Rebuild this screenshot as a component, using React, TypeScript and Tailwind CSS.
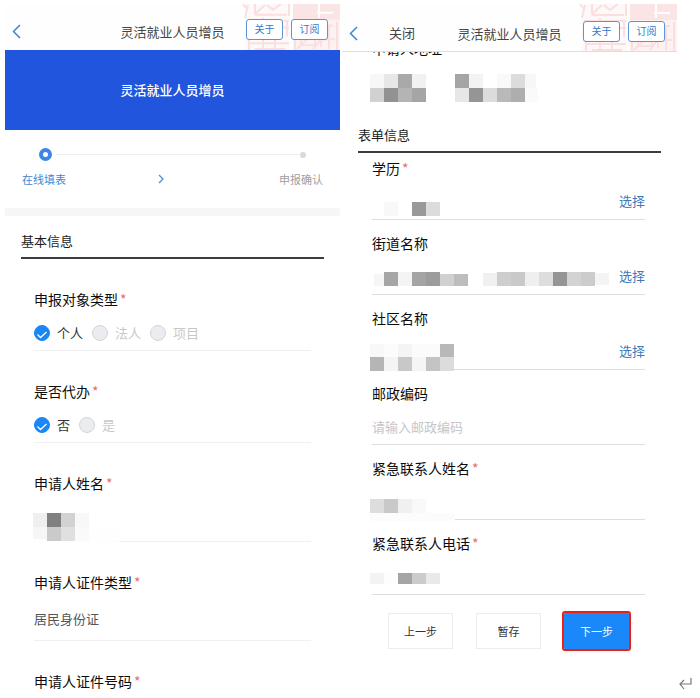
import React from "react";

type Cell = [x: number, y: number, w: number, h: number, fill: string];

function Mosaic({ cells, className }: { cells: Cell[]; className: string }) {
  return (
    <svg className={`-ml-0.5 block shrink-0 overflow-visible ${className}`} shapeRendering="crispEdges" aria-hidden="true">
      {cells.map(([x, y, w, h, fill], i) => (
        <rect key={i} x={x} y={y} width={w} height={h} fill={fill} />
      ))}
    </svg>
  );
}

function Seal() {
  return (
    <svg className="pointer-events-none absolute top-0 right-0 h-full w-[99px]" viewBox="0 0 99 47" preserveAspectRatio="none" fill="none" aria-hidden="true">
      <rect x="4" y="0" width="45" height="47" fill="#fef8f8" />
      <rect x="52" y="0" width="47" height="47" fill="#fdf1f1" />
      <rect x="52" y="0" width="47" height="16" fill="#fbe4e5" />
      <g stroke="#f9dfe0" strokeWidth="2">
        <path d="M2 0l3 4M7 1l-3 13M14 10L24 1M26 1l6 5 8-6M14 11h32M48 0v12M14 0v11" />
        <path d="M6 17h42M6 24h42M10 17v14M22 14v33M34 17v30M46 17v16M8 40h40M8 33v14M14 46h30" />
        <path d="M54 17v30M60 22h32M60 30h14v12H60zM80 22v22M88 22v24M96 18v29M56 46l10-10M72 46l8-10M80 36h14" />
      </g>
      <path d="M76 9h16M78 0v14" stroke="#fff" strokeWidth="2" />
    </svg>
  );
}

function Header({ closable = false, className }: { closable?: boolean; className: string }) {
  return (
    <header className={`relative grid grid-cols-[1fr_auto_1fr] items-end bg-[#fefefe] ${className}`}>
      <Seal />
      <div className={`relative flex items-center pl-[7px] ${closable ? "gap-[31px]" : ""}`}>
        <button type="button" aria-label="返回" className="flex h-[18px] items-center">
          <svg className="h-[15px] w-[9px]" viewBox="0 0 9 15" fill="none" stroke="#3f82d8" strokeWidth="1.5" aria-hidden="true">
            <path d="M8 1L1.5 7.5L8 14" />
          </svg>
        </button>
        {closable && (
          <button type="button" className="text-[13px] leading-4 text-[#444]">关闭</button>
        )}
      </div>
      <h1 className="relative text-[13px] leading-4 text-[#444]">灵活就业人员增员</h1>
      <div className="relative flex justify-end gap-2 pr-3">
        {["关于", "订阅"].map((t) => (
          <button key={t} type="button" className="flex h-[21px] w-[37px] items-center justify-center rounded-[3px] border border-[#5b95d6] bg-white pb-px text-[10px] leading-4 text-[#2f79cc]">
            {t}
          </button>
        ))}
      </div>
    </header>
  );
}

function SectionTitle({ children, className }: { children: string; className: string }) {
  return (
    <h2 className={`mx-4 border-b-2 border-[#3c3c3c] pb-[7px] text-[13px] leading-[18px] text-[#1c1c1c] ${className}`}>
      {children}
    </h2>
  );
}

function Name({ text, required }: { text: string; required?: boolean }) {
  return (
    <span className="block pb-0.5 text-[14px] leading-[18px] text-[#0c0c0c]">
      {text}
      {required && <span className="ml-0.5 text-[#ea6a6f]">*</span>}
    </span>
  );
}

function Radios({ legend, name, options }: { legend: string; name: string; options: string[] }) {
  return (
    <fieldset>
      <legend><Name text={legend} required /></legend>
      <div className="flex h-[41px] items-center gap-[9px] border-b border-[#f0f0f0] pt-[6px]">
        {options.map((o, i) => (
          <label key={o} className={`relative flex items-center gap-[7px] text-[13px] leading-5 ${i === 0 ? "text-[#333]" : "text-[#c8c8c8]"}`}>
            <input
              type="radio"
              name={name}
              defaultChecked={i === 0}
              disabled={i !== 0}
              className="size-4 appearance-none rounded-full border border-[#d4d5d8] bg-[#ebecef] checked:border-[#1b86f5] checked:bg-[#1b86f5]"
            />
            {i === 0 && (
              <svg className="pointer-events-none absolute left-0 size-4" viewBox="0 0 16 16" fill="none" stroke="#fff" strokeWidth="1.3" aria-hidden="true">
                <path d="M3.5 9.5L6.5 12.5L12.5 7" />
              </svg>
            )}
            {o}
          </label>
        ))}
      </div>
    </fieldset>
  );
}

function Redacted({ text, required, cells, pick, className = "h-[41px] border-[#dedede]" }: { text: string; required?: boolean; cells: Cell[]; pick?: boolean; className?: string }) {
  return (
    <div>
      <Name text={text} required={required} />
      <div className={`flex items-start justify-between border-b ${className}`}>
        <Mosaic cells={cells} className="h-10 w-60" />
        {pick && (
          <button type="button" aria-label={`选择${text}`} className="mt-3 shrink-0 text-[13px] leading-5 text-[#4179bb]">选择</button>
        )}
      </div>
    </div>
  );
}

const address: Cell[] = [
  [0, 0, 14, 14, "#f7f7f7"], [14, 0, 14, 14, "#e7e7e7"], [28, 0, 14, 14, "#a9a9a9"], [42, 0, 14, 14, "#f1f1f1"],
  [0, 14, 14, 14, "#d1d1d1"], [14, 14, 14, 14, "#929292"], [28, 14, 14, 14, "#b4b4b4"], [42, 14, 14, 14, "#a5a5a5"],
  [85, 0, 14, 14, "#a5a5a5"], [99, 0, 14, 14, "#f3f3f3"], [127, 0, 14, 14, "#f9f9f9"], [141, 0, 14, 14, "#dcdcdc"], [155, 0, 11, 14, "#f7f7f7"],
  [85, 14, 14, 14, "#e7e7e7"], [99, 14, 14, 14, "#959595"], [113, 14, 14, 14, "#dcdcdc"], [127, 14, 14, 14, "#b9b9b9"], [141, 14, 14, 14, "#aeaeae"], [155, 14, 13, 14, "#fafafa"],
];
const applicant: Cell[] = [
  [1, 34, 86, 15, "#fefefe"],
  [1, 19, 14, 14, "#efefef"], [15, 19, 14, 14, "#808080"], [29, 19, 14, 14, "#d2d2d2"], [43, 19, 14, 14, "#f8f8f8"],
  [1, 33, 14, 12, "#f6f6f6"], [15, 33, 14, 14, "#cacaca"], [29, 33, 14, 14, "#e0e0e0"], [43, 33, 14, 14, "#fafafa"],
];
const education: Cell[] = [
  [14, 23, 14, 14, "#f8f8f8"], [42, 23, 14, 14, "#999999"], [56, 23, 14, 14, "#dcdcdc"],
];
const street: Cell[] = [
  [4, 20, 10, 12, "#f6f6f6"], [14, 18, 14, 14, "#a6a6a6"], [28, 18, 14, 14, "#f4f4f4"], [42, 18, 14, 14, "#a4a4a4"], [56, 18, 14, 14, "#9c9c9c"],
  [70, 20, 14, 12, "#d0d0d0"], [84, 20, 14, 12, "#bdbdbd"], [113, 19, 14, 13, "#f0f0f0"], [127, 18, 14, 14, "#cecece"], [141, 18, 14, 14, "#c9c9c9"],
  [155, 18, 14, 14, "#efefef"], [169, 18, 14, 14, "#dddddd"], [183, 18, 14, 14, "#959595"], [197, 18, 14, 14, "#d3d3d3"], [211, 18, 14, 14, "#cccccc"], [225, 19, 14, 12, "#f4f4f4"],
];
const community: Cell[] = [
  [0, 15, 14, 13, "#f8f8f8"], [14, 15, 14, 13, "#fcfcfc"], [28, 15, 14, 13, "#f4f4f4"], [42, 15, 28, 13, "#fbfbfb"], [70, 15, 14, 13, "#b8b8b8"],
  [0, 28, 14, 14, "#b5b5b5"], [14, 28, 14, 14, "#f4f4f4"], [28, 28, 14, 14, "#c8c8c8"], [42, 28, 14, 14, "#f5f5f5"], [56, 28, 14, 14, "#c4c4c4"], [70, 28, 14, 14, "#dcdcdc"],
];
const contact: Cell[] = [
  [0, 34, 85, 8, "#fcfcfc"],
  [0, 20, 14, 14, "#dddddd"], [14, 20, 14, 14, "#c9c9c9"], [28, 20, 14, 14, "#f0f0f0"], [42, 20, 14, 14, "#f9f9f9"],
];
const phone: Cell[] = [
  [0, 19, 14, 11, "#f3f3f3"], [14, 19, 14, 11, "#fdfdfd"], [28, 19, 14, 11, "#a5a5a5"], [42, 19, 14, 11, "#cbcbcb"], [56, 19, 14, 11, "#e9e9e9"],
];

function StartScreen() {
  return (
    <section aria-label="基本信息">
      <Header className="h-[46px] pb-[10px]" />
      <div className="flex h-20 items-center justify-center bg-[#2255dd] text-[13px] leading-5 font-medium text-white">灵活就业人员增员</div>
      <div className="border-b-8 border-[#f6f6f6] pt-[18px] pb-[21px]">
        <div className="flex items-center px-[34px]">
          <span className="size-[13px] rounded-full border-4 border-[#3d86e8] bg-white" />
          <span className="mr-px ml-1 h-px flex-1 bg-[#eeeeee]" />
          <span className="size-[6px] rounded-full bg-[#dadada]" />
        </div>
        <div className="mt-[10px] flex items-center justify-between px-[17px] text-[11px] leading-4">
          <span className="text-[#3f88cd]">在线填表</span>
          <svg className="mr-6 h-[10px] w-[6px]" viewBox="0 0 6 10" fill="none" stroke="#4a90d9" strokeWidth="1.3" aria-hidden="true">
            <path d="M1 1l4 4l-4 4" />
          </svg>
          <span className="text-[#a0a0a0]">申报确认</span>
        </div>
      </div>
      <SectionTitle className="pt-4">基本信息</SectionTitle>
      <div className="flex flex-col gap-[31px] px-[29px] pt-[31px]">
        <Radios legend="申报对象类型" name="subject" options={["个人", "法人", "项目"]} />
        <Radios legend="是否代办" name="agent" options={["否", "是"]} />
        <Redacted text="申请人姓名" required cells={applicant} className="h-12 border-[#f0f0f0]" />
        <label>
          <Name text="申请人证件类型" required />
          <input readOnly defaultValue="居民身份证" className="block h-12 w-full border-b border-[#f0f0f0] bg-transparent pt-1 text-[13px] text-[#555] outline-none" />
        </label>
        <Name text="申请人证件号码" required />
      </div>
    </section>
  );
}

function DetailScreen() {
  return (
    <section aria-label="表单信息">
      <Header closable className="h-12 border-b border-[#dedede] pb-[9px]" />
      <div className="overflow-hidden">
        <div className="-mt-[13px] px-[30px]">
          <Name text="申请人地址" />
          <Mosaic cells={address} className="mt-[15px] h-7 w-60" />
        </div>
        <SectionTitle className="mt-6">表单信息</SectionTitle>
        <form className="pt-[6px] pb-10" onSubmit={(e) => e.preventDefault()}>
          <div className="flex flex-col gap-[14px] pr-8 pl-[30px]">
            <Redacted text="学历" required cells={education} pick />
            <Redacted text="街道名称" cells={street} pick />
            <Redacted text="社区名称" cells={community} pick />
            <label>
              <Name text="邮政编码" />
              <input placeholder="请输入邮政编码" className="block h-[41px] w-full border-b border-[#dedede] bg-transparent pt-1 text-[13px] text-[#444] outline-none placeholder:text-[#c6c6c6]" />
            </label>
            <Redacted text="紧急联系人姓名" required cells={contact} />
            <Redacted text="紧急联系人电话" required cells={phone} />
          </div>
          <div className="mt-[18px] flex justify-center gap-[23px] pr-0.5 text-[11px] text-[#333]">
            <button type="button" className="h-9 w-[65px] border border-[#ececec] bg-white">上一步</button>
            <button type="button" className="h-9 w-[65px] border border-[#ececec] bg-white">暂存</button>
            <button type="submit" className="h-9 w-[65px] rounded-[1px] bg-[#1a88f8] text-white outline-2 outline-[#f21d14]">下一步</button>
          </div>
        </form>
      </div>
    </section>
  );
}

export default function App() {
  return (
    <div className="flex min-h-screen bg-white pt-1 pl-[5px] font-['Noto_Sans_CJK_SC',sans-serif]">
      <main className="grid flex-1 grid-cols-2 gap-0.5">
        <StartScreen />
        <DetailScreen />
      </main>
      <div className="flex w-[23px] items-end pb-2 pl-0.5">
        <svg className="h-3 w-[13px]" viewBox="0 0 13 12" fill="none" stroke="#777" strokeWidth="1.2" aria-hidden="true">
          <path d="M12 0v6H1M5 2L1 6l4 5" />
        </svg>
      </div>
    </div>
  );
}
